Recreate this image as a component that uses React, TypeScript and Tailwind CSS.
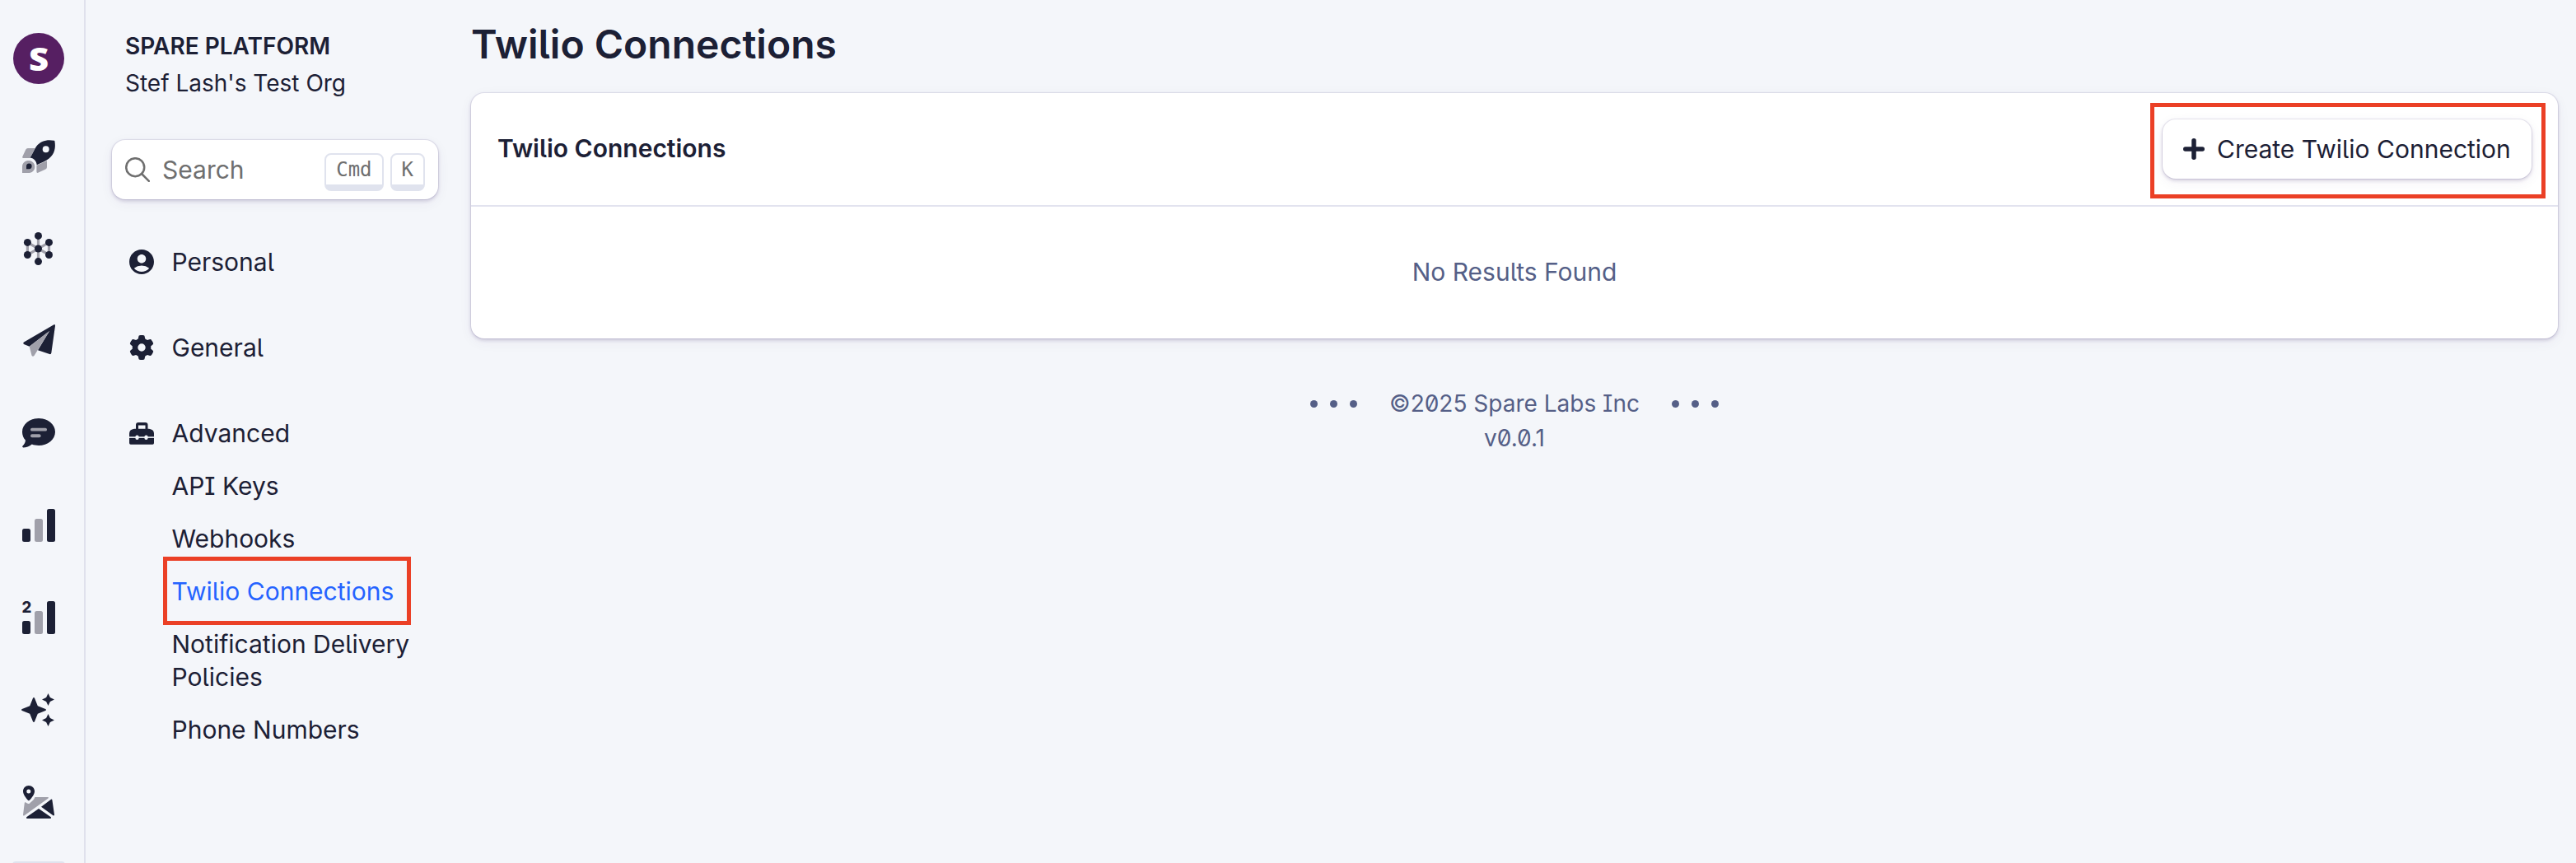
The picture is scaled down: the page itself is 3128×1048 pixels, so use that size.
import type { ReactNode } from "react";
import { FaGear } from "react-icons/fa6";
import { MdAccountCircle } from "react-icons/md";

const DARK = "#1c2035";
const MUTED = "#a0a0aa";

function RailIcon({ children }: { children: ReactNode }) {
  return (
    <svg viewBox="0 0 40 40" className="size-10 shrink-0 overflow-visible" fill={DARK}>
      {children}
    </svg>
  );
}

function Rocket() {
  return (
    <RailIcon>
      <path fill={MUTED} d="M6.8 10H15.3L9.7 22H1.2Q-.5 22 .3 20.2L4.2 11.8Q5 10 6.8 10ZM30 25.3V33Q30 34.8 28.4 35.5L19.2 39.8Q17.4 40.4 17.4 38.6V30.7ZM0 40V32.6C0 22.2 15.3 22.6 15.3 32.4C15.3 37.4 11.8 39.8 7.4 40Z" />
      <path d="M39 .7C30.500-.8 22.500 .5 17 8C14.500 11.500 12.500 17 9.700 21.500C14.500 22.500 17.200 25.500 17.700 30.300C22.500 27.500 28.500 26 32.500 22.500C39.500 17 40.800 9.500 39.400 1.300Q39.400 .8 39 .7ZM28.700 7.300A4 4 0 1 1 28.700 15.300A4 4 0 1 1 28.700 7.300Z" fillRule="evenodd" />
      <path d="M5 35.2V32A3.300 3.300 0 1 1 8.300 35.200Z" />
    </RailIcon>
  );
}

function Network() {
  const nodes = [[19.5, 4.4], [6.4, 12.4], [32.5, 12.4], [19.5, 20], [6.4, 27.5], [32.5, 27.5], [19.5, 35.6]];
  return (
    <RailIcon>
      <path stroke={MUTED} strokeWidth="3.2" fill="none" d="M19.500 4.400V35.600M6.400 12.400V27.500L32.500 12.400V27.500L6.400 12.400" />
      {nodes.map(([x, y]) => (
        <circle key={`${x}-${y}`} cx={x} cy={y} r="4.500" />
      ))}
    </RailIcon>
  );
}

function Plane() {
  return (
    <RailIcon>
      <path d="M38 .4Q40.300-.6 40 1.800L35.300 34.800Q34.900 36.600 33.200 36L19 31.200L33 8L8.700 26.700L2 24Q.2 22.800 2 21.400Z" />
      <path fill={MUTED} d="M33 8L14.600 37.800Q13 39.500 11.500 37.800L8.700 26.700Z" />
    </RailIcon>
  );
}

function Chat() {
  return (
    <RailIcon>
      <path d="M20 2C31 2 40 9.200 40 18.400S31 34.900 20 34.900C17 34.900 14.200 34.500 11.800 33.500C8.500 36 5 37.500 1.200 37.500Q-.6 37.200 .5 35.500C2.800 33.200 4 31 3.900 28.600C1.400 25.800 0 22.300 0 18.400C0 9.200 9 2 20 2Z" />
      <rect x="10" y="13.700" width="20" height="3.900" rx="1.900" fill={MUTED} />
      <rect x="10" y="21.300" width="12.600" height="3.900" rx="1.900" fill={MUTED} />
    </RailIcon>
  );
}

function Bars() {
  return (
    <RailIcon>
      <rect x="0" y="24" width="10" height="16" rx="2.500" />
      <rect x="15" y="12" width="10" height="28" rx="2.500" fill={MUTED} />
      <rect x="30" y="0" width="10" height="40" rx="2.500" />
    </RailIcon>
  );
}

function BarsTwo() {
  return (
    <RailIcon>
      <text x="-0.600" y="14" fontFamily="Inter, sans-serif" fontWeight="800" fontSize="18.500">2</text>
      <rect x="0" y="24" width="10" height="16" rx="2.500" />
      <rect x="15" y="12" width="10" height="28" rx="2.500" fill={MUTED} />
      <rect x="30" y="0" width="10" height="40" rx="2.500" />
    </RailIcon>
  );
}

function Sparkles() {
  return (
    <RailIcon>
      <path d="M14 5Q14.700 5 15 5.800L18.800 15.200L28.200 19Q29 19.300 29 20T28.200 21L18.800 24.800L15 34.200Q14.700 35 14 35T13 34.200L9.200 24.800L-.2 21Q-1 20.700-1 20T-.2 19L9.200 15.200L13 5.800Q13.300 5 14 5Z" />
      <path d="M31.500 0L33.900 5.100L39 7.500L33.900 9.900L31.500 15L29.100 9.900L24 7.500L29.100 5.100ZM31.500 25L33.900 30.100L39 32.500L33.900 34.900L31.500 40L29.100 34.900L24 32.500L29.100 30.100Z" />
    </RailIcon>
  );
}

function MapPin() {
  return (
    <RailIcon>
      <path fill={MUTED} d="M15.400 14H31Q32.800 14.400 31.500 15.500L2.300 36.400Q.8 36.900 1 35.500L2.800 21Q3 19.500 4.500 20.600C6.500 22.500 8.500 22.500 10 20.500C12.500 18.500 14.800 16.500 15.400 14Z" />
      <path d="M35 16.800Q36.200 16.200 36.400 17.500L39 35.300Q39 37 37.500 36.200L23 25.700ZM20 28L34.800 38.200Q35.800 40 34 40H6Q4.200 40 5.200 38.200ZM7.800 0C12 0 15 3 15 7C15 10.500 11.500 15 8.800 17.800Q7.900 18.500 7 17.800C4.500 15 1 10.500 1 7C1 3 4 0 7.800 0ZM7.800 4.500A2.500 2.500 0 1 0 7.800 9.500A2.500 2.500 0 1 0 7.800 4.500Z" fillRule="evenodd" />
    </RailIcon>
  );
}

function Toolbox() {
  return (
    <svg viewBox="0 0 30 27" className="h-[27px] w-[30px]" fill={DARK}>
      <path
        fillRule="evenodd"
        d="M8 7.700V3Q8 0 11 0H19.500Q22.500 0 22.500 3V7.700H24Q30 8.500 30 13.500V25Q30 26.700 28.300 26.700H1.700Q0 26.700 0 25V13.500Q0 8.500 6 7.700ZM11 3.600V7.700H19.500V3.600Z"
      />
      <g fill="#f4f6fa">
        <rect y="17.300" width="30" height="1.600" />
        <rect x="7.400" y="15.500" width="4.200" height="5.400" rx="2" />
        <rect x="18.400" y="15.500" width="4.200" height="5.400" rx="2" />
      </g>
    </svg>
  );
}

function Plus() {
  return (
    <svg viewBox="0 0 26 26" className="size-[26px]" stroke={DARK} strokeWidth="5.500" strokeLinecap="round">
      <path d="M13 2.750V23.250M2.750 13H23.250" />
    </svg>
  );
}

function Section({ icon, label }: { icon: ReactNode; label: string }) {
  return (
    <div className="flex h-16 items-center">
      <span className="flex w-[36px] shrink-0 items-center justify-center">{icon}</span>
      <span className="ml-[18.5px]">{label}</span>
    </div>
  );
}

function Dots() {
  return (
    <span className="flex gap-[15px]">
      <i className="size-[9px] rounded-full bg-[#555f87]" />
      <i className="size-[9px] rounded-full bg-[#555f87]" />
      <i className="size-[9px] rounded-full bg-[#555f87]" />
    </span>
  );
}

function Kbd({ children }: { children: ReactNode }) {
  return (
    <kbd className="flex h-[46px] items-center rounded-[8px] border-2 border-b-[8px] border-[#e0e3ee] px-[12px] font-['DejaVu_Sans_Mono',monospace] text-[24px] text-[#6f6f6f]">
      {children}
    </kbd>
  );
}

export default function App() {
  return (
    <div className="flex h-[1048px] w-[3128px] overflow-hidden bg-[#f4f6fa] font-[Inter,sans-serif] text-[30px] leading-[40px] text-[#1c2035] [font-feature-settings:'ss02','cv05','cv08','zero']">
      <aside className="flex w-[104px] shrink-0 flex-col items-center border-r-2 border-[#e0e1ec] pr-[8px] pt-[40px]">
        <div className="flex size-[62px] shrink-0 items-center justify-center rounded-full bg-[#561f62] font-['Open_Sans',sans-serif] text-[38px] font-extrabold text-white">
          <span className="scale-x-110">S</span>
        </div>
        <nav className="mt-[68px] flex flex-col gap-[72px]">
          <Rocket />
          <Network />
          <Plane />
          <Chat />
          <Bars />
          <BarsTwo />
          <Sparkles />
          <MapPin />
        </nav>
        <div className="mt-[52px] h-1 w-16 shrink-0 rounded-t-sm bg-[#e0e3ee]" />
      </aside>

      <aside className="flex w-[428px] shrink-0 flex-col pl-8 pt-[36px]">
        <div className="pl-4 text-[28px]">
          <div className="font-semibold">SPARE PLATFORM</div>
          <div className="mt-[5px]">Stef Lash's Test Org</div>
        </div>
        <div className="mt-[49px] flex h-[72px] w-[396px] items-center rounded-[16px] bg-white pl-4 pr-4 text-[#6f6f6f] shadow-[0_0_0_1px_rgba(80,70,130,0.1),0_2px_4px_rgba(60,40,110,0.22),0_4px_16px_rgba(60,40,110,0.06)]">
          <svg viewBox="0 0 30 30" className="size-[30px]" fill="none" stroke="#6f6f6f" strokeWidth="2.500" strokeLinecap="round">
            <circle cx="12.200" cy="12.200" r="11" />
            <path d="M20 20L28.800 28.800" />
          </svg>
          <span className="ml-[15px] flex-1">Search</span>
          <span className="mt-[6px] flex gap-2">
            <Kbd>Cmd</Kbd>
            <Kbd>K</Kbd>
          </span>
        </div>
        <nav className="mt-[44px] pl-[18px]">
          <Section icon={<MdAccountCircle size={36} />} label="Personal" />
          <div className="mt-10">
            <Section icon={<FaGear size={30} />} label="General" />
          </div>
          <div className="mt-10">
            <Section icon={<Toolbox />} label="Advanced" />
          </div>
          <ul className="pl-[54.5px]">
            <li className="py-3">API Keys</li>
            <li className="py-3">Webhooks</li>
            <li className="relative py-3 text-[#2563ff]">
              Twilio Connections
              <span className="absolute left-[-11px] top-[-10px] h-[83px] w-[301px] border-[5px] border-[#eb4026]" />
            </li>
            <li className="w-[300px] py-3">Notification Delivery Policies</li>
            <li className="py-3">Phone Numbers</li>
          </ul>
        </nav>
      </aside>

      <main className="ml-10 flex w-[2534px] flex-col pt-[24px]">
        <h1 className="text-[48px] font-semibold leading-[60px]">Twilio Connections</h1>
        <section className="mt-[29px] h-[298px] rounded-[16px] bg-white shadow-[0_0_0_1px_rgba(80,70,130,0.1),0_2px_4px_rgba(60,40,110,0.22),0_4px_16px_rgba(60,40,110,0.06)]">
          <header className="flex h-[138px] items-center justify-between border-b-2 border-[#e2e3ef] pl-8 pr-8">
            <h2 className="pb-[2px] font-semibold">Twilio Connections</h2>
            <button className="relative flex h-[72px] w-[448px] items-center rounded-[16px] bg-white pl-[25px] shadow-[0_0_0_1px_rgba(80,70,130,0.1),0_2px_4px_rgba(60,40,110,0.22),0_4px_16px_rgba(60,40,110,0.06)]">
              <Plus />
              <span className="ml-[15px] whitespace-nowrap">Create Twilio Connection</span>
              <span className="absolute left-[-15px] top-[-20px] h-[116px] w-[480px] border-[5px] border-[#eb4026]" />
            </button>
          </header>
          <div className="flex h-[158px] items-center justify-center text-[#555f87]">No Results Found</div>
        </section>
        <footer className="mt-[58px] flex flex-col items-center text-[28px] leading-[42px] text-[#555f87]">
          <div className="flex items-center gap-[39px]">
            <Dots />
            <span>©2025 Spare Labs Inc</span>
            <Dots />
          </div>
          <div>v0.0.1</div>
        </footer>
      </main>
    </div>
  );
}
